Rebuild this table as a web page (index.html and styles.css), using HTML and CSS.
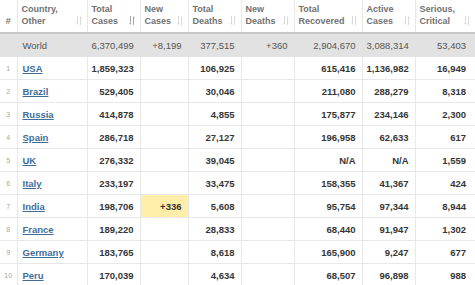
FILE: index.html
```html
<!DOCTYPE html>
<html lang="en">
  <head>
    <meta charset="UTF-8" />
    <meta name="viewport" content="width=device-width, initial-scale=1.0" />
    <title>Coronavirus Cases</title>
    <link rel="stylesheet" href="styles.css">
  </head>
  <body>
    <table class="covidTable">
      <colgroup>
        <col class="colRank" />
        <col class="colCountry" />
        <col class="colTotal" />
        <col class="colNew" />
        <col class="colDeaths" />
        <col class="colNewDeaths" />
        <col class="colRecovered" />
        <col class="colActive" />
        <col class="colSerious" />
      </colgroup>
      <thead>
        <tr>
          <th class="rank">#</th>
          <th>Country,<br />Other<span class="sort"><svg width="6" height="9" viewBox="0 0 6 9"><path d="M1.5 0v8M0.5 7l1 1.5M4.5 9V1M5.5 2l-1-1.5" /></svg></span></th>
          <th>Total<br />Cases<span class="sort active"><svg width="6" height="9" viewBox="0 0 6 9"><path d="M1.5 0v8M0.5 7l1 1.5M4.5 9V1M5.5 2l-1-1.5" /></svg></span></th>
          <th>New<br />Cases<span class="sort"><svg width="6" height="9" viewBox="0 0 6 9"><path d="M1.5 0v8M0.5 7l1 1.5M4.5 9V1M5.5 2l-1-1.5" /></svg></span></th>
          <th>Total<br />Deaths<span class="sort"><svg width="6" height="9" viewBox="0 0 6 9"><path d="M1.5 0v8M0.5 7l1 1.5M4.5 9V1M5.5 2l-1-1.5" /></svg></span></th>
          <th>New<br />Deaths<span class="sort"><svg width="6" height="9" viewBox="0 0 6 9"><path d="M1.5 0v8M0.5 7l1 1.5M4.5 9V1M5.5 2l-1-1.5" /></svg></span></th>
          <th>Total<br />Recovered<span class="sort"><svg width="6" height="9" viewBox="0 0 6 9"><path d="M1.5 0v8M0.5 7l1 1.5M4.5 9V1M5.5 2l-1-1.5" /></svg></span></th>
          <th>Active<br />Cases<span class="sort"><svg width="6" height="9" viewBox="0 0 6 9"><path d="M1.5 0v8M0.5 7l1 1.5M4.5 9V1M5.5 2l-1-1.5" /></svg></span></th>
          <th>Serious,<br />Critical<span class="sort"><svg width="6" height="9" viewBox="0 0 6 9"><path d="M1.5 0v8M0.5 7l1 1.5M4.5 9V1M5.5 2l-1-1.5" /></svg></span></th>
        </tr>
      </thead>
      <tbody>
        <tr class="world">
          <td></td>
          <td class="country">World</td>
          <td>6,370,499</td>
          <td>+8,199</td>
          <td>377,515</td>
          <td>+360</td>
          <td>2,904,670</td>
          <td>3,088,314</td>
          <td>53,403</td>
        </tr>
        <tr>
          <td class="rank">1</td>
          <td class="country"><a href="#">USA</a></td>
          <td>1,859,323</td>
          <td></td>
          <td>106,925</td>
          <td></td>
          <td>615,416</td>
          <td>1,136,982</td>
          <td>16,949</td>
        </tr>
        <tr>
          <td class="rank">2</td>
          <td class="country"><a href="#">Brazil</a></td>
          <td>529,405</td>
          <td></td>
          <td>30,046</td>
          <td></td>
          <td>211,080</td>
          <td>288,279</td>
          <td>8,318</td>
        </tr>
        <tr>
          <td class="rank">3</td>
          <td class="country"><a href="#">Russia</a></td>
          <td>414,878</td>
          <td></td>
          <td>4,855</td>
          <td></td>
          <td>175,877</td>
          <td>234,146</td>
          <td>2,300</td>
        </tr>
        <tr>
          <td class="rank">4</td>
          <td class="country"><a href="#">Spain</a></td>
          <td>286,718</td>
          <td></td>
          <td>27,127</td>
          <td></td>
          <td>196,958</td>
          <td>62,633</td>
          <td>617</td>
        </tr>
        <tr>
          <td class="rank">5</td>
          <td class="country"><a href="#">UK</a></td>
          <td>276,332</td>
          <td></td>
          <td>39,045</td>
          <td></td>
          <td>N/A</td>
          <td>N/A</td>
          <td>1,559</td>
        </tr>
        <tr>
          <td class="rank">6</td>
          <td class="country"><a href="#">Italy</a></td>
          <td>233,197</td>
          <td></td>
          <td>33,475</td>
          <td></td>
          <td>158,355</td>
          <td>41,367</td>
          <td>424</td>
        </tr>
        <tr>
          <td class="rank">7</td>
          <td class="country"><a href="#">India</a></td>
          <td>198,706</td>
          <td class="newCases">+336</td>
          <td>5,608</td>
          <td></td>
          <td>95,754</td>
          <td>97,344</td>
          <td>8,944</td>
        </tr>
        <tr>
          <td class="rank">8</td>
          <td class="country"><a href="#">France</a></td>
          <td>189,220</td>
          <td></td>
          <td>28,833</td>
          <td></td>
          <td>68,440</td>
          <td>91,947</td>
          <td>1,302</td>
        </tr>
        <tr>
          <td class="rank">9</td>
          <td class="country"><a href="#">Germany</a></td>
          <td>183,765</td>
          <td></td>
          <td>8,618</td>
          <td></td>
          <td>165,900</td>
          <td>9,247</td>
          <td>677</td>
        </tr>
        <tr>
          <td class="rank">10</td>
          <td class="country"><a href="#">Peru</a></td>
          <td>170,039</td>
          <td></td>
          <td>4,634</td>
          <td></td>
          <td>68,507</td>
          <td>96,898</td>
          <td>988</td>
        </tr>
      </tbody>
    </table>
  </body>
</html>
```

FILE: styles.css
```css
html,
body {
  overflow: hidden;
}
body {
  margin: 0;
  padding: 0;
  background-color: #fff;
  font-family: "Liberation Sans", Arial, sans-serif;
  color: #363636;
}

/* Table */
.covidTable {
  border-collapse: collapse;
  table-layout: fixed;
  width: 475px;
}
.colRank { width: 17px; }
.colCountry { width: 70px; }
.colTotal { width: 53px; }
.colNew { width: 48px; }
.colDeaths { width: 53px; }
.colNewDeaths { width: 53px; }
.colRecovered { width: 68px; }
.colActive { width: 53px; }
.colSerious { width: 60px; }

/* Header */
th {
  position: relative;
  height: 27px;
  padding: 0 4px 3px;
  text-align: left;
  vertical-align: middle;
  font-size: 9px;
  line-height: 12px;
  font-weight: bold;
  color: #727272;
  border-left: 1px solid #e8e8e8;
  border-bottom: 2px solid #c8c8c8;
}
th:first-child {
  border-left: none;
}
th.rank {
  text-align: center;
  vertical-align: bottom;
  padding: 0 0 5px;
}
.sort {
  position: absolute;
  right: 5px;
  bottom: 7px;
  line-height: 0;
}
.sort path {
  fill: none;
  stroke: #d8d8d8;
  stroke-width: 1;
}
.sort.active path {
  stroke: #a8a8a8;
}

/* Body rows */
td {
  height: 22px;
  padding: 0 6px 0 4px;
  text-align: right;
  font-size: 9.5px;
  font-weight: bold;
  white-space: nowrap;
  border-left: 1px solid #e8e8e8;
  border-bottom: 1px solid #e8e8e8;
}
td:first-child {
  border-left: none;
}
td:last-child {
  padding-right: 9px;
}
td.rank {
  padding: 0;
  text-align: center;
  font-size: 7px;
  font-weight: normal;
  color: #a8a8a8;
}
td.country {
  text-align: left;
  padding-left: 5px;
}
td.country a {
  color: #3f6d98;
  text-decoration: underline;
}
td.newCases {
  background-color: #ffeeaa;
  color: #333;
}

/* World total */
tr.world td {
  background-color: #e2e2e2;
  font-weight: normal;
  color: #555;
  border-left-color: #e2e2e2;
  border-bottom: 1px solid #e2e2e2;
}
```
